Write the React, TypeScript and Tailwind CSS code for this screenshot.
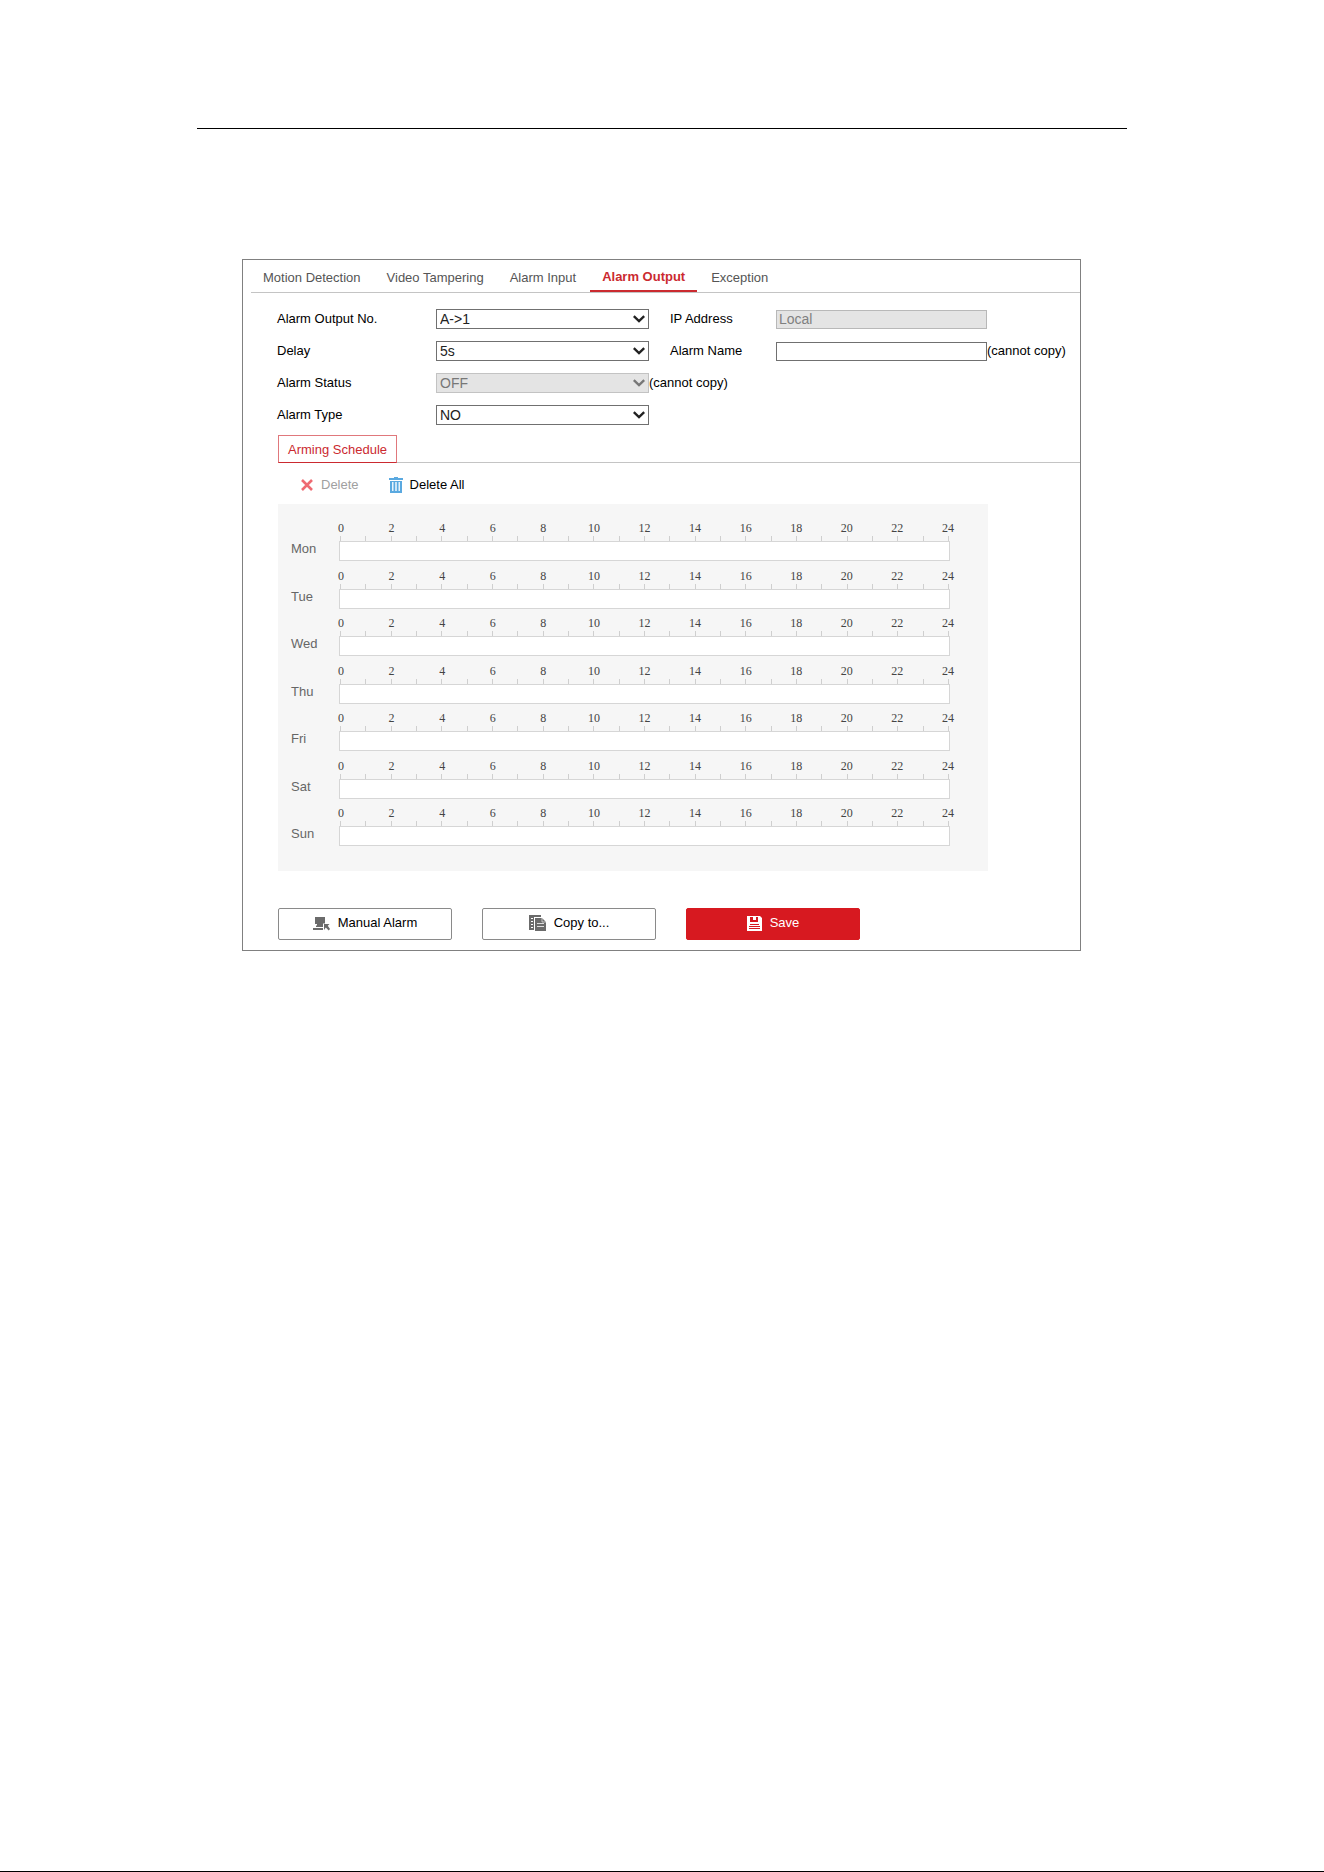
import React, { useState } from 'react';

const TABS = ['Motion Detection', 'Video Tampering', 'Alarm Input', 'Alarm Output', 'Exception'];
const DAYS = ['Mon', 'Tue', 'Wed', 'Thu', 'Fri', 'Sat', 'Sun'];
const HOURS = Array.from({ length: 25 }, (_, i) => i);

interface SelectFieldProps {
  id: string;
  label: string;
  options: string[];
  disabled?: boolean;
  note?: string;
}

const SelectField: React.FC<SelectFieldProps> = ({ id, label, options, disabled = false, note }) => (
  <>
    <label htmlFor={id}>{label}</label>
    <div className="flex items-center whitespace-nowrap">
      <div className="relative w-[213px] shrink-0">
        <select
          id={id}
          disabled={disabled}
          className="block h-5 w-full appearance-none border border-[#707070] bg-white pl-[3px] text-sm leading-4 text-[#222] disabled:border-[#c3c3c3] disabled:bg-[#e4e4e4] disabled:text-[#777] disabled:opacity-100"
        >
          {options.map((option) => (
            <option key={option}>{option}</option>
          ))}
        </select>
        <svg
          viewBox="0 0 12 8"
          className={`pointer-events-none absolute top-1.5 right-1 h-2 w-3 ${disabled ? 'text-[#777]' : 'text-[#222]'}`}
          fill="none"
          stroke="currentColor"
          strokeWidth="2.4"
        >
          <path d="M0.8 1.2 6 6.2 11.2 1.2" />
        </svg>
      </div>
      {note && <span>{note}</span>}
    </div>
  </>
);

interface TextFieldProps {
  id: string;
  label: string;
  defaultValue?: string;
  disabled?: boolean;
  note?: string;
}

const TextField: React.FC<TextFieldProps> = ({ id, label, defaultValue = '', disabled = false, note }) => (
  <>
    <label htmlFor={id}>{label}</label>
    <div className="flex items-center whitespace-nowrap">
      <input
        id={id}
        type="text"
        defaultValue={defaultValue}
        disabled={disabled}
        className="h-[19px] w-[211px] border border-[#707070] bg-white px-0.5 text-sm leading-4 disabled:border-[#b8b8b8] disabled:bg-[#e4e4e4] disabled:text-[#808080]"
      />
      {note && <span>{note}</span>}
    </div>
  </>
);

const DayRow: React.FC<{ day: string }> = ({ day }) => (
  <div className="flex items-end">
    <span className="w-12 shrink-0 pb-1 leading-4 text-[#666]">{day}</span>
    <div className="min-w-0 flex-1">
      <div className="flex h-3.5 justify-between px-0.5 font-['Liberation_Serif',serif] text-xs leading-3 text-[#444]">
        {HOURS.filter((h) => h % 2 === 0).map((h) => (
          <span key={h} className="flex w-0 justify-center">
            {h}
          </span>
        ))}
      </div>
      <div className="flex h-[5px] justify-between px-px">
        {HOURS.map((h) => (
          <span key={h} className="w-px bg-[#cfcfcf]" />
        ))}
      </div>
      <div className="h-5 border border-[#d6d6d6] bg-white" />
    </div>
  </div>
);

const CrossIcon = () => (
  <svg viewBox="0 0 12 12" className="h-3 w-3" fill="none" stroke="#ee6a72" strokeWidth="2.6">
    <path d="M1 1 11 11M11 1 1 11" />
  </svg>
);

const TrashIcon = () => (
  <svg viewBox="0 0 14 16" className="h-4 w-3.5">
    <path d="M5 0h4v1h5v2H0V1h5z" fill="#5aa9e0" />
    <path d="M1 4h12v12H1z" fill="#5aa9e0" />
    <path d="M3 5h1.5v9H3zM6.2 5h1.6v9H6.2zM9.5 5H11v9H9.5z" fill="#e6f3fc" />
  </svg>
);

const ManualAlarmIcon = () => (
  <svg viewBox="0 0 17 15" className="h-[15px] w-[17px]" fill="#6b6b6b">
    <path d="M2 1h10v6.500H10V11H3V9.500h1V8H2z" />
    <path d="M0 12h10v2H0z" />
    <path d="M11 8h5.500l-1.700 1.700 2.200 3.300-1.300 1.500-2.900-2.900L11 14z" />
  </svg>
);

const CopyIcon = () => (
  <svg viewBox="0 0 17 16" className="h-4 w-[17px]">
    <path d="M0 0h12v2H5v13H0z" fill="#6b6b6b" />
    <path d="M2 3h2v1H2zM2 6h2v1H2zM2 9h2v1H2zM2 12h2v1H2z" fill="#fff" />
    <path d="M6 3h7l4 4v9H6z" fill="#6b6b6b" />
    <path d="M13 3v4h4" fill="none" stroke="#fff" strokeWidth="0.6" />
    <path d="M8 8h7v1H8zM8 11h7v1H8z" fill="#ddd" />
  </svg>
);

const SaveIcon = () => (
  <svg viewBox="0 0 15 15" className="h-[15px] w-[15px]">
    <path d="M0 0h13l2 2v13H0z" fill="#fff" />
    <path d="M3 1h8v5H3z" fill="#d71920" />
    <path d="M6 0h3v4H6z" fill="#fff" />
    <path d="M3 8h9v1H3zM2 10h11v1H2zM2 12h11v1H2z" fill="#d71920" />
  </svg>
);

interface ActionButtonProps {
  icon: React.ReactNode;
  label: string;
  primary?: boolean;
}

const ActionButton: React.FC<ActionButtonProps> = ({ icon, label, primary = false }) => (
  <button
    type="button"
    className={`flex h-8 w-[174px] items-center justify-center gap-2 rounded-xs border pb-0.5 ${
      primary ? 'border-[#d71920] bg-[#d71920] text-white' : 'border-[#8a8a8a] bg-white text-black'
    }`}
  >
    {icon}
    {label}
  </button>
);

export default function App() {
  const [activeTab, setActiveTab] = useState('Alarm Output');

  return (
    <div className="min-h-screen border-b border-black bg-white pt-32 font-['Liberation_Sans',Arial,sans-serif] text-[13px] leading-4 text-black">
      <main className="mx-auto max-w-[930px]">
        <hr className="border-t border-black" />

        <section className="mt-[130px] mr-[46px] ml-[45px] border border-[#808080]">
          <nav className="ml-2 flex gap-0.5 border-b border-[#c4c4c4] pt-2">
            {TABS.map((tab) => (
              <button
                key={tab}
                type="button"
                onClick={() => setActiveTab(tab)}
                className={`h-6 border-b-2 px-3 whitespace-nowrap ${
                  tab === activeTab
                    ? 'border-[#cb2a30] pb-1 font-bold text-[#cb2a30]'
                    : 'border-transparent pb-0.5 text-[#555]'
                }`}
              >
                {tab}
              </button>
            ))}
          </nav>

          <form className="grid grid-cols-[159px_234px_106px_1fr] auto-rows-[20px] items-center gap-y-3 pt-4 pl-[34px]">
            <SelectField id="output-no" label="Alarm Output No." options={['A->1']} />
            <TextField id="ip-address" label="IP Address" defaultValue="Local" disabled />
            <SelectField id="delay" label="Delay" options={['5s']} />
            <TextField id="alarm-name" label="Alarm Name" note="(cannot copy)" />
            <SelectField id="alarm-status" label="Alarm Status" options={['OFF']} disabled note="(cannot copy)" />
            <div className="col-span-2" />
            <SelectField id="alarm-type" label="Alarm Type" options={['NO', 'NC']} />
          </form>

          <div className="mt-2.5 ml-[35px] flex border-b border-[#c4c4c4]">
            <button
              type="button"
              className="-mb-px h-7 w-[119px] border border-[#e0787c] border-b-[#cb2a30] pt-0.5 text-[#cb2a30]"
            >
              Arming Schedule
            </button>
          </div>

          <div className="mt-3.5 ml-[58px] flex h-4 items-center gap-[30px]">
            <button type="button" disabled className="flex items-center gap-2 text-[#a0a0a0]">
              <CrossIcon />
              Delete
            </button>
            <button type="button" className="flex items-center gap-[7px]">
              <TrashIcon />
              Delete All
            </button>
          </div>

          <div className="mt-[11px] mr-[92px] ml-[35px] flex h-[367px] flex-col justify-between bg-[#f6f6f6] pt-[18px] pr-[38px] pb-[25px] pl-[13px]">
            {DAYS.map((day) => (
              <DayRow key={day} day={day} />
            ))}
          </div>

          <div className="mt-[37px] mb-2.5 ml-[35px] flex gap-[30px]">
            <ActionButton icon={<ManualAlarmIcon />} label="Manual Alarm" />
            <ActionButton icon={<CopyIcon />} label="Copy to..." />
            <ActionButton icon={<SaveIcon />} label="Save" primary />
          </div>
        </section>
      </main>
    </div>
  );
}
